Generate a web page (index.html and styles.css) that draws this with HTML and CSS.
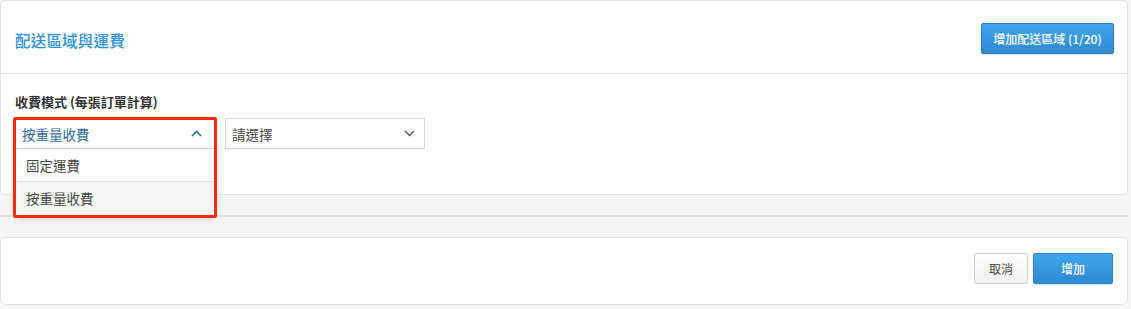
FILE: index.html
```html
<!DOCTYPE html>
<html lang="zh-Hant">
<head>
<meta charset="utf-8">
<title>配送區域與運費</title>
<link rel="stylesheet" href="styles.css">
</head>
<body>
<section class="card card-top">
  <div class="card-header">
    <h2 class="title">配送區域與運費</h2>
    <button class="btn btn-primary btn-add-zone">增加配送區域 (1/20)</button>
  </div>
  <div class="card-body">
    <div class="field-label">收費模式 (每張訂單計算)</div>
    <div class="select-row">
      <div class="select-wrap">
        <div class="select select-open">
          <span class="select-value">按重量收費</span>
          <svg class="chev" width="11" height="7" viewBox="0 0 11 7"><polyline points="1,6 5.5,1.5 10,6" fill="none" stroke="#2d6aa0" stroke-width="1.6"/></svg>
        </div>
        <ul class="dropdown">
          <li class="opt">固定運費</li>
          <li class="opt opt-active">按重量收費</li>
        </ul>
        <div class="annot"></div>
      </div>
      <div class="select">
        <span class="select-placeholder">請選擇</span>
        <svg class="chev" width="11" height="7" viewBox="0 0 11 7"><polyline points="1,1 5.5,5.5 10,1" fill="none" stroke="#555" stroke-width="1.4"/></svg>
      </div>
    </div>
  </div>
</section>
<div class="divider"></div>
<section class="card card-bottom">
  <div class="actions">
    <button class="btn btn-default">取消</button>
    <button class="btn btn-primary btn-submit">增加</button>
  </div>
</section>
</body>
</html>
```

FILE: styles.css
```css
* { box-sizing: border-box; }
html, body { margin: 0; padding: 0; }
body {
  background: #f5f5f5;
  font-family: "Noto Sans CJK TC", "Liberation Sans", sans-serif;
  color: #333;
  width: 1131px;
  height: 309px;
  overflow: hidden;
}
.card {
  background: #fff;
  border: 1px solid #e2e2e2;
  border-radius: 5px;
  width: 1128px;
}
.card-top { height: 195px; }
.card-header {
  height: 72px;
  border-bottom: 1px solid #e2e2e2;
  display: flex;
  align-items: center;
  justify-content: space-between;
  padding: 0 14px 0 15px;
  box-sizing: content-box;
  margin: 0 -1px;
}
.title {
  margin: 6px 0 0 0;
  font-size: 15.5px;
  font-weight: 500;
  color: #2a90d8;
  letter-spacing: 0.2px;
}
.btn {
  font-family: "Noto Sans CJK TC", "Liberation Sans", sans-serif;
  font-size: 12px;
  height: 31px;
  border-radius: 2px;
  cursor: pointer;
  padding: 0;
}
.btn-primary {
  color: #fff;
  background: linear-gradient(#40a6ec, #2f8ad2);
  border: 1px solid #2b7fc4;
  box-shadow: 0 1px 2px rgba(0,0,0,0.15);
  font-weight: 500;
}
.btn-add-zone { width: 133px; margin-top: 2px; }
.btn-default {
  color: #444;
  background: linear-gradient(#ffffff, #f0f0f0);
  border: 1px solid #cfcfcf;
  width: 54px;
}
.btn-submit { width: 80px; }
.card-body { padding: 19px 14px 0 14px; }
.field-label {
  font-size: 13px;
  font-weight: 700;
  line-height: 18px;
  color: #333;
  margin-bottom: 7px;
}
.select-row { display: flex; gap: 10px; }
.select-wrap { position: relative; }
.select {
  width: 200px;
  height: 31px;
  border: 1px solid #d6d6d6;
  display: flex;
  align-items: center;
  justify-content: space-between;
  padding: 0 9px 0 6px;
  font-size: 13.5px;
  color: #444;
  background: #fff;
}
.select-open {
  border-color: #fff;
  border-bottom: 1px solid #d6d6d6;
  padding-left: 6px;
  padding-right: 12px;
}
.select-value { color: #2d6aa0; }
.chev { display: block; }
.dropdown {
  position: absolute;
  left: 1px;
  top: 31px;
  width: 198px;
  margin: 0;
  padding: 0;
  list-style: none;
  background: #fff;
  box-shadow: 0 3px 8px rgba(0,0,0,0.18);
  z-index: 2;
}
.opt {
  height: 33px;
  line-height: 33px;
  padding-left: 10px;
  font-size: 13.5px;
  color: #444;
  border-bottom: 1px solid #dedede;
}
.opt-active { background: #f7f7f7; border-bottom: none; height: 33px; }
.annot {
  position: absolute;
  left: -2px;
  top: -1px;
  width: 204px;
  height: 101px;
  border: 3px solid #ff2a0a;
  border-radius: 2px;
  z-index: 3;
  pointer-events: none;
}
.divider {
  height: 2px;
  background: #e4e4e4;
  margin: 20px 3px 20px 0;
}
.card-bottom { height: 68px; }
.actions {
  display: flex;
  justify-content: flex-end;
  gap: 5px;
  padding: 15px 14px 0 0;
}
```
